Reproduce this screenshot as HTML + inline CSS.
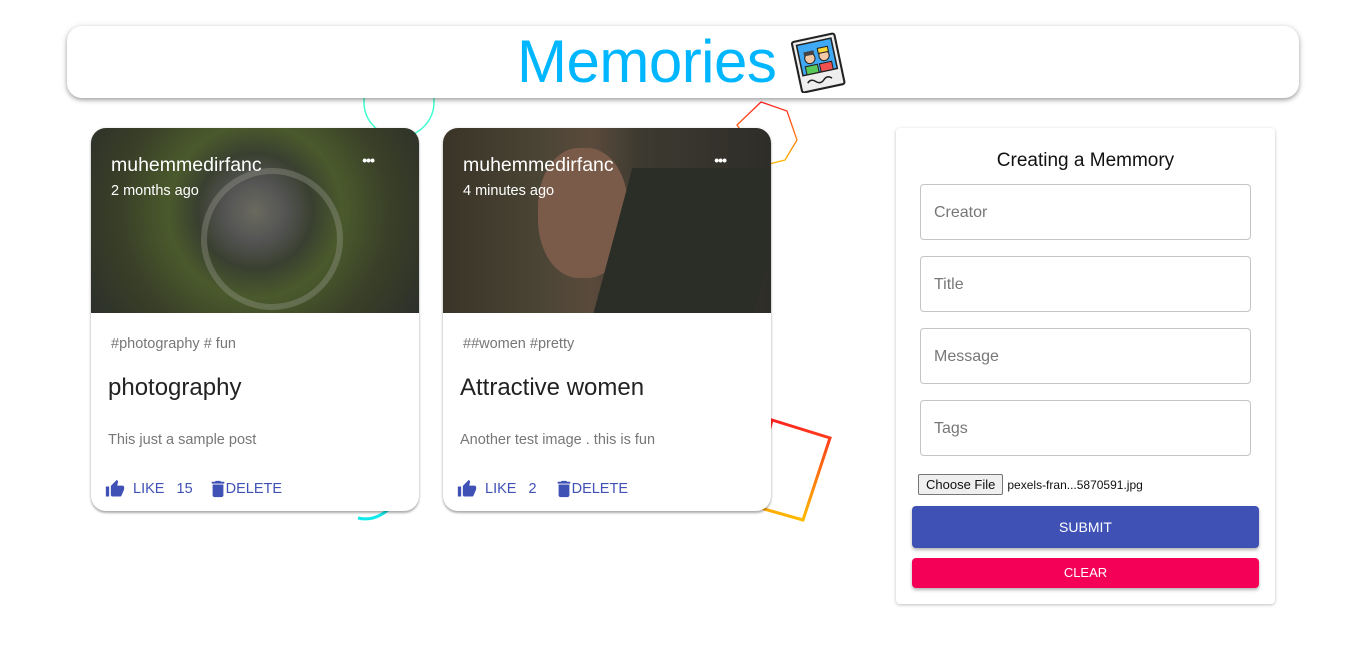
<!DOCTYPE html>
<html><head><style>
body{margin:0;width:1366px;height:653px;background:#fff;font-family:"Liberation Sans",sans-serif;position:relative;overflow:hidden}
.hdr{position:absolute;left:67px;top:26px;width:1232px;height:72px;background:#fff;border-radius:15px;box-shadow:0 2px 4px rgba(0,0,0,.3),0 1px 8px rgba(0,0,0,.12);z-index:2}
.hdr h1{margin:0;position:absolute;left:450px;top:1px;font-weight:400;font-size:60px;color:#00b7ff;letter-spacing:-.5px}
.card{position:absolute;top:128px;width:328px;height:383px;background:#fff;border-radius:15px;box-shadow:0 2px 2px rgba(0,0,0,.3),0 0 3px rgba(0,0,0,.1);overflow:hidden;z-index:2}
.img{height:185px;position:relative}
.name{position:absolute;left:20px;top:26px;color:#fff;font-size:19.5px}
.time{position:absolute;left:20px;top:55px;color:#fff;font-size:14.5px}
.dots{position:absolute;right:45px;top:24px;color:#fff;font-size:14px;letter-spacing:-1px;font-weight:bold}
.tags{position:absolute;left:20px;top:208px;font-size:14.5px;color:#777}
.title{position:absolute;left:17px;top:246px;font-size:24px;color:#222}
.msg{position:absolute;left:17px;top:304px;font-size:14.5px;color:#777}
.act{position:absolute;left:14px;top:351px;font-size:14.5px;color:#3f51b5;display:flex;align-items:center}
.form{position:absolute;left:896px;top:128px;width:379px;height:476px;background:#fff;box-shadow:0 1px 3px rgba(0,0,0,.25);border-radius:4px}
.form h3{margin:0;position:absolute;top:22px;width:100%;text-align:center;font-weight:400;font-size:19px;color:#111}
.in{position:absolute;left:24px;width:331px;height:56px;border:1px solid #c4c4c4;border-radius:4px;box-sizing:border-box;padding:19px 13px;font-size:16px;color:#777}
.btn{position:absolute;left:16px;width:347px;color:#fff;text-align:center;border-radius:4px;box-shadow:0 2px 3px rgba(0,0,0,.3);font-size:14px}
</style></head><body>
<svg style="position:absolute;left:0;top:0;z-index:1" width="1366" height="653">
<defs><linearGradient id="g" x1="0" y1="0" x2="0" y2="1"><stop offset="0" stop-color="#f22"/><stop offset="1" stop-color="#fb0"/></linearGradient></defs>
<circle cx="399" cy="102" r="35" fill="none" stroke="#3fffd0" stroke-width="1.5"/>
<polygon points="761,102 787,111 797,140 785,160 765,165 737,125" fill="none" stroke="url(#g)" stroke-width="1.3"/>
<polygon points="772,420 830,438 803,520 750,505" fill="none" stroke="url(#g)" stroke-width="3"/>
<path d="M358 518 Q375 522 390 508" fill="none" stroke="#10eaea" stroke-width="3"/>
</svg>
<div class="hdr"><h1>Memories</h1>
<svg style="position:absolute;left:722px;top:5px" width="58" height="62" viewBox="0 0 56 60"><g transform="rotate(-12 28 30)"><rect x="7" y="6" width="42" height="50" rx="2" fill="#eee" stroke="#222" stroke-width="2"/><rect x="11" y="10" width="34" height="30" fill="#3fa9f5" stroke="#222" stroke-width="1.5"/><circle cx="21" cy="25" r="5" fill="#f5c9a6" stroke="#222"/><circle cx="35" cy="25" r="5" fill="#f5c9a6" stroke="#222"/><rect x="15" y="32" width="12" height="8" fill="#5ac85a" stroke="#222"/><rect x="29" y="32" width="12" height="8" fill="#f05050" stroke="#222"/><rect x="30" y="17" width="10" height="5" fill="#fdd835" stroke="#222"/><rect x="16" y="18" width="10" height="4" fill="#444"/><path d="M14 48q4-4 8 0t8 0 8 0" fill="none" stroke="#222" stroke-width="1.5"/></g></svg></div>

<div class="card" style="left:91px"><div class="img" style="background:radial-gradient(circle at 50% 45%,#6a6a5e 0,#555 15%,#3a4030 30%,#4a5a2c 45%,#3a3f28 70%,#2c302a 100%)">
<div style="position:absolute;left:110px;top:40px;width:130px;height:130px;border-radius:50%;border:6px solid rgba(160,160,150,.35)"></div>
<div class="name">muhemmedirfanc</div><div class="time">2 months ago</div><div class="dots">•••</div></div>
<div class="tags">#photography # fun</div><div class="title">photography</div><div class="msg">This just a sample post</div>
<div class="act"><svg width="20" height="20" viewBox="0 0 24 24"><path fill="#3f51b5" d="M1 21h4V9H1v12zm22-11c0-1.1-.9-2-2-2h-6.31l.95-4.57.03-.32c0-.41-.17-.79-.44-1.06L14.17 1 7.59 7.59C7.22 7.95 7 8.45 7 9v10c0 1.1.9 2 2 2h9c.83 0 1.54-.5 1.84-1.22l3.02-7.05c.09-.23.14-.47.14-.73v-2z"/></svg><span style="margin-left:8px">LIKE&nbsp;&nbsp;&nbsp;15</span>
<svg style="margin-left:17px" width="16" height="18" viewBox="4 2 16 20"><path fill="#3f51b5" d="M6 19c0 1.1.9 2 2 2h8c1.1 0 2-.9 2-2V7H6v12zM19 4h-3.5l-1-1h-5l-1 1H5v2h14V4z"/></svg><span>DELETE</span></div></div>

<div class="card" style="left:443px"><div class="img" style="background:linear-gradient(90deg,#3a3428 0,#4b4535 30%,#5a4a3c 45%,#3d3a30 60%,#2e2d28 100%)">
<div style="position:absolute;left:95px;top:20px;width:90px;height:130px;border-radius:45%;background:#7a5a48"></div>
<div style="position:absolute;left:170px;top:40px;width:160px;height:145px;background:#2a2e26;transform:skew(-15deg)"></div>
<div class="name">muhemmedirfanc</div><div class="time">4 minutes ago</div><div class="dots">•••</div></div>
<div class="tags">##women #pretty</div><div class="title">Attractive women</div><div class="msg">Another test image . this is fun</div>
<div class="act"><svg width="20" height="20" viewBox="0 0 24 24"><path fill="#3f51b5" d="M1 21h4V9H1v12zm22-11c0-1.1-.9-2-2-2h-6.31l.95-4.57.03-.32c0-.41-.17-.79-.44-1.06L14.17 1 7.59 7.59C7.22 7.95 7 8.45 7 9v10c0 1.1.9 2 2 2h9c.83 0 1.54-.5 1.84-1.22l3.02-7.05c.09-.23.14-.47.14-.73v-2z"/></svg><span style="margin-left:8px">LIKE&nbsp;&nbsp;&nbsp;2</span>
<svg style="margin-left:19px" width="16" height="18" viewBox="4 2 16 20"><path fill="#3f51b5" d="M6 19c0 1.1.9 2 2 2h8c1.1 0 2-.9 2-2V7H6v12zM19 4h-3.5l-1-1h-5l-1 1H5v2h14V4z"/></svg><span>DELETE</span></div></div>

<div class="form"><h3>Creating a Memmory</h3>
<div class="in" style="top:56px">Creator</div><div class="in" style="top:128px">Title</div><div class="in" style="top:200px">Message</div><div class="in" style="top:272px">Tags</div>
<div style="position:absolute;left:22px;top:346px;font-size:12px;color:#111;display:flex;align-items:center"><span style="border:1px solid #767676;background:#efefef;border-radius:2px;padding:2px 7px;font-size:13px">Choose File</span><span style="margin-left:4px">pexels-fran...5870591.jpg</span></div>
<div class="btn" style="top:378px;height:42px;line-height:42px;background:#3f51b5">SUBMIT</div>
<div class="btn" style="top:430px;height:30px;line-height:30px;background:#f50057;font-size:13px">CLEAR</div></div>
</body></html>
